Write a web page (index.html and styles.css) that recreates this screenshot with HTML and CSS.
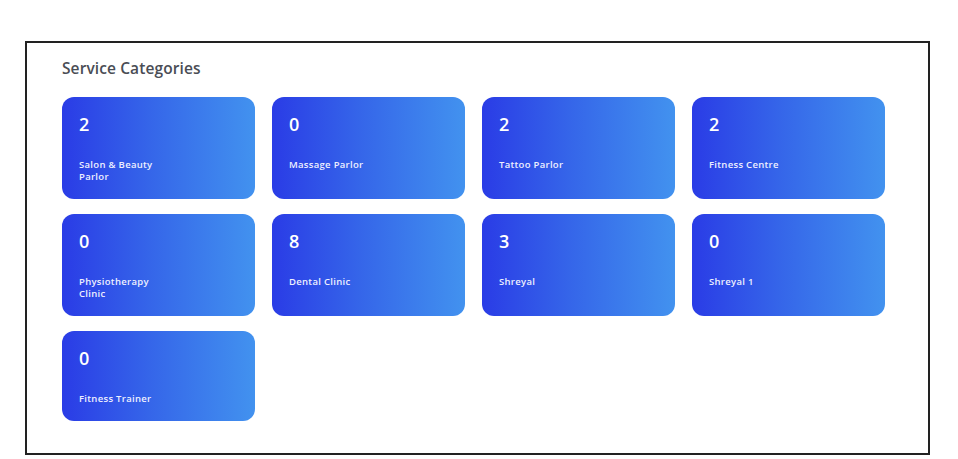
FILE: index.html
```html
<!DOCTYPE html>
<html>
<head>
<meta charset="utf-8">
<link rel="stylesheet" href="styles.css">
</head>
<body>
<div class="panel">
  <h2 class="title">Service Categories</h2>
  <div class="grid">
    <div class="card"><div class="num">2</div><div class="label">Salon &amp; Beauty<br>Parlor</div></div>
    <div class="card"><div class="num">0</div><div class="label">Massage Parlor</div></div>
    <div class="card"><div class="num">2</div><div class="label">Tattoo Parlor</div></div>
    <div class="card"><div class="num">2</div><div class="label">Fitness Centre</div></div>
    <div class="card"><div class="num">0</div><div class="label">Physiotherapy<br>Clinic</div></div>
    <div class="card"><div class="num">8</div><div class="label">Dental Clinic</div></div>
    <div class="card"><div class="num">3</div><div class="label">Shreyal</div></div>
    <div class="card"><div class="num">0</div><div class="label">Shreyal 1</div></div>
    <div class="card"><div class="num">0</div><div class="label">Fitness Trainer</div></div>
  </div>
</div>
</body>
</html>
```
FILE: styles.css
```css
html, body {
  margin: 0;
  padding: 0;
  background: #ffffff;
}
body {
  padding: 41px 0 0 25px;
  font-family: "Open Sans", "Liberation Sans", sans-serif;
}
.panel {
  box-sizing: border-box;
  width: 905px;
  height: 414px;
  border: 2px solid #222;
  background: #fff;
  padding: 13px 0 0 35px;
}
.title {
  margin: 0 0 17px 0;
  font-size: 15.5px;
  line-height: 24px;
  font-weight: 600;
  color: #4a4d55;
  letter-spacing: 0.1px;
}
.grid {
  display: grid;
  grid-template-columns: repeat(4, 193px);
  column-gap: 17px;
  row-gap: 15px;
}
.card {
  box-sizing: border-box;
  border-radius: 12px;
  background: linear-gradient(90deg, #2a3ce6 0%, #3565e9 45%, #4292ef 100%);
  color: #fff;
  padding: 15px 17px 16px 17px;
}
.num {
  font-size: 18px;
  line-height: 24px;
  font-weight: 600;
}
.label {
  margin-top: 23px;
  font-size: 9.5px;
  line-height: 12px;
  font-weight: 600;
  letter-spacing: 0.3px;
  color: #eef0ff;
}
```
